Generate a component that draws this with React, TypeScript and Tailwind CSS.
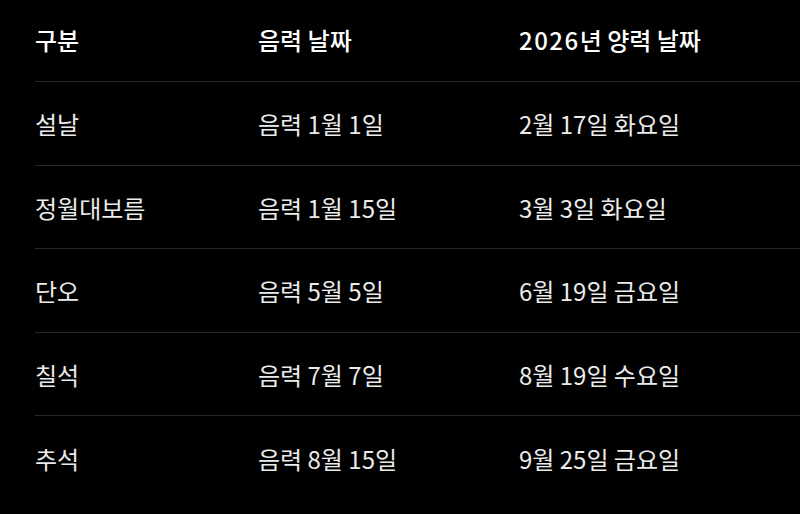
import React from "react";

const rows = [
  ["설날", "음력 1월 1일", "2월 17일 화요일"],
  ["정월대보름", "음력 1월 15일", "3월 3일 화요일"],
  ["단오", "음력 5월 5일", "6월 19일 금요일"],
  ["칠석", "음력 7월 7일", "8월 19일 수요일"],
  ["추석", "음력 8월 15일", "9월 25일 금요일"],
];

export default function App() {
  return (
    <div
      className="w-[800px] h-[514px] bg-black overflow-hidden pl-[35px]"
      style={{ fontFamily: '"Noto Sans CJK KR", "Noto Sans", sans-serif' }}
    >
      <div className="grid grid-cols-[223px_261px_1fr] h-[82px] items-center border-b border-[#2a2a2c] text-[24px] font-medium text-white">
        <div className="pb-[2px]">구분</div>
        <div className="pb-[2px]">음력 날짜</div>
        <div className="pb-[2px]">
          <span className="tracking-[1.5px]">2026</span>년 양력 날짜
        </div>
      </div>
      {rows.map((r, i) => (
        <div
          key={i}
          className={`grid grid-cols-[223px_261px_1fr] h-[83.5px] items-center text-[24px] text-[#ebebeb] ${
            i < rows.length - 1 ? "border-b border-[#2a2a2c]" : ""
          }`}
        >
          <div className="pt-[2px]">{r[0]}</div>
          <div className="pt-[2px]">{r[1]}</div>
          <div className="pt-[2px]">{r[2]}</div>
        </div>
      ))}
    </div>
  );
}
